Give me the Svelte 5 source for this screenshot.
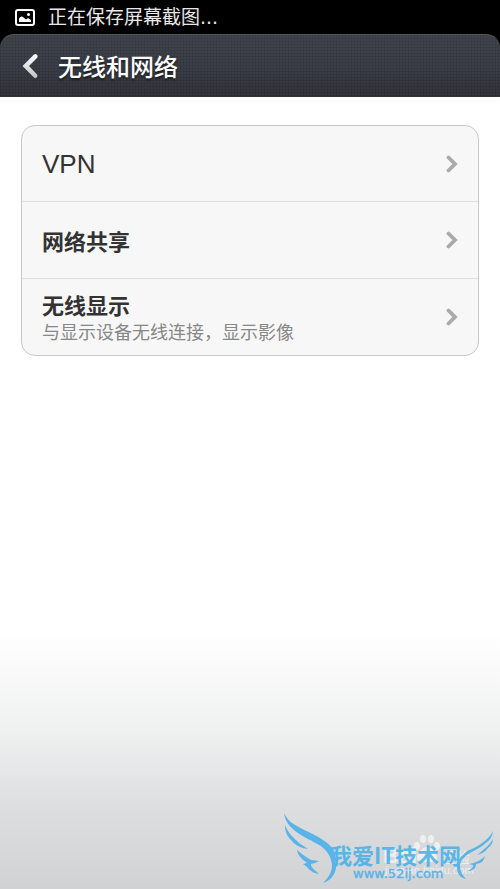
<script>
  const items = [
    { title: 'VPN', latin: true },
    { title: '网络共享' },
    { title: '无线显示', note: '与显示设备无线连接，显示影像' }
  ];
</script>

<div class="screen">
  <div class="top">
    <div class="status">
      <svg width="20" height="17" viewBox="0 0 20 17" aria-hidden="true">
        <rect x="1" y="1" width="18" height="15" rx="2" fill="none" stroke="#fff" stroke-width="2" />
        <path d="M4 13V9.500Q6 6.500 8 8L11 10.500L13 9L16 11V13Z" fill="#fff" />
        <circle cx="13.500" cy="5.500" r="1.500" fill="#fff" />
      </svg>
      <span>正在保存屏幕截图...</span>
    </div>

    <header>
      <button class="back" aria-label="返回">
        <svg width="16" height="26" viewBox="0 0 16 26" aria-hidden="true">
          <defs>
            <linearGradient id="arrow" x1="0" y1="0" x2="0" y2="1">
              <stop offset="0" stop-color="#fff" />
              <stop offset="1" stop-color="#c4c4c4" />
            </linearGradient>
          </defs>
          <path d="M12 1.500Q14 0 15.500 2.500Q16 4 15 5L7 13L15 21.500Q16 23 15 24Q13.500 26 12 24.500L0.500 13Z" fill="url(#arrow)" />
        </svg>
      </button>
      <h1>无线和网络</h1>
    </header>
  </div>

  <main>
    <ul>
      {#each items as item}
        <li>
          <button class="row">
            <span class="text">
              <span class="title" class:latin={item.latin}>{item.title}</span>
              {#if item.note}<span class="note">{item.note}</span>{/if}
            </span>
            <svg width="12" height="18" viewBox="0 0 12 18" aria-hidden="true">
              <path d="M2.500 2.500L9 9L2.500 15.500" fill="none" stroke="#aaa" stroke-width="3.800" stroke-linecap="round" />
            </svg>
          </button>
        </li>
      {/each}
    </ul>
  </main>

  <svg class="mark" width="220" height="80" viewBox="0 0 220 80">
    <g fill="#fff" opacity="0.6">
      <ellipse cx="137" cy="37" rx="3" ry="4" />
      <ellipse cx="143" cy="30" rx="3" ry="4" />
      <ellipse cx="151" cy="30" rx="3" ry="4" />
      <ellipse cx="157" cy="37" rx="3" ry="4" />
      <path d="M147 38C152 38 157 45 157 49C156 54 151 53 147 53C143 53 138 54 137 49C137 45 142 38 147 38Z" />
      <text class="baidu" x="103" y="54">Bai</text>
      <text class="cjk" x="160" y="54">经验</text>
      <text class="site" x="105" y="65">jingyan.baidu.com</text>
    </g>
    <g fill="#45aeea" opacity="0.85">
      <path d="M4 4C7 10 11 14 17 17C25 22 32 24 40 29C48 34 54 39 55 45L56 59C55 66 50 72 43 74C47 70 52 64 52 57C52 49 48 43 41 37C33 32 22 28 14 21C8 16 5 11 4 4Z" />
      <path d="M5 16C8 24 14 29 19 34L28 40C20 39 15 36 11 31C6 26 5 21 5 16Z" />
      <path d="M17 41C21 44 25 48 31 51L39 52L35 54L31 55C31 59 35 61 39 65C33 64 29 61 27 58L23 55L27 54C22 50 18 47 17 41Z" />
      <text class="brand" x="50" y="55">我爱IT技术网</text>
      <text class="url" x="73" y="69">www.52ij.com</text>
      <path d="M213 22C212 28 210 31 207 33C202 38 195 41 190 44C185 47 181 51 180 56C180 63 183 67 186 70C180 69 177 64 177 59C177 53 180 48 184 45C188 40 195 40 202 34C208 30 211 26 213 22Z" />
      <path d="M213 30C213 34 211 37 208 39C205 43 201 45 197 46C203 41 209 37 213 30Z" />
      <path d="M205 47C204 50 203 53 200 54L196 55C196 60 192 62 188 62C191 60 194 58 193 56L189 55C196 54 201 51 205 47Z" />
    </g>
  </svg>
</div>

<style>
  :global(body) {
    margin: 0;
  }
  .screen {
    position: relative;
    min-height: 100vh;
    background: linear-gradient(#fff 71%, #f9f9f9 76%, #edefef 83%, #dedfe1 90%, #d1d2d4);
    font-family: "Noto Sans CJK SC", sans-serif;
    color: #333;
  }
  .top {
    background: #000;
  }
  .status {
    display: flex;
    align-items: center;
    gap: 13px;
    height: 34px;
    padding: 0 15px;
    color: #e8e8e8;
    font-family: "DejaVu Sans", "Noto Sans CJK SC", sans-serif;
    font-size: 19px;
    line-height: 34px;
  }
  header {
    display: flex;
    align-items: center;
    gap: 20px;
    height: 63px;
    box-sizing: border-box;
    padding: 0 22px;
    border-top: 1px solid #54565b;
    border-radius: 14px 14px 0 0;
    background:
      repeating-linear-gradient(90deg, rgba(0, 0, 0, 0.08) 0 1px, transparent 1px 3px),
      repeating-linear-gradient(rgba(0, 0, 0, 0.08) 0 1px, transparent 1px 3px),
      linear-gradient(#40434b, #3a3e48 50%, #323338);
    color: #fff;
  }
  h1 {
    margin: 0;
    font-size: 24px;
    line-height: 36px;
    font-weight: 500;
    text-shadow: 0 2px 2px rgba(0, 0, 0, 0.5);
  }
  button {
    margin: 0;
    padding: 0;
    border: 0;
    background: none;
    color: inherit;
    font: inherit;
  }
  .back {
    display: flex;
  }
  main {
    padding: 28px 21px;
  }
  ul {
    margin: 0;
    padding: 0;
    list-style: none;
    border: 1px solid #c8c8c8;
    border-radius: 14px;
    background: #f7f7f7;
    overflow: hidden;
  }
  li + li {
    border-top: 1px solid #dedede;
  }
  .row {
    display: flex;
    align-items: center;
    justify-content: space-between;
    width: 100%;
    min-height: 76px;
    padding: 0 20px;
    text-align: left;
  }
  li:first-child .row {
    min-height: 75px;
  }
  .text {
    display: flex;
    flex-direction: column;
  }
  .title {
    font-size: 22px;
    line-height: 28px;
    font-weight: 700;
  }
  .latin {
    font-family: "Liberation Sans", sans-serif;
    font-size: 26px;
    font-weight: 400;
  }
  .note {
    color: #888;
    font-size: 18px;
    line-height: 26px;
  }
  .mark {
    position: absolute;
    right: 0;
    bottom: 0;
  }
  .baidu {
    font: 700 22px "Liberation Sans", sans-serif;
  }
  .cjk {
    font-size: 15px;
  }
  .site {
    font: 11px "Liberation Sans", sans-serif;
  }
  .brand {
    font-size: 22px;
    font-weight: 700;
  }
  .url {
    font: 13px "DejaVu Sans", sans-serif;
    stroke: #45aeea;
    stroke-width: 0.4px;
  }
</style>
